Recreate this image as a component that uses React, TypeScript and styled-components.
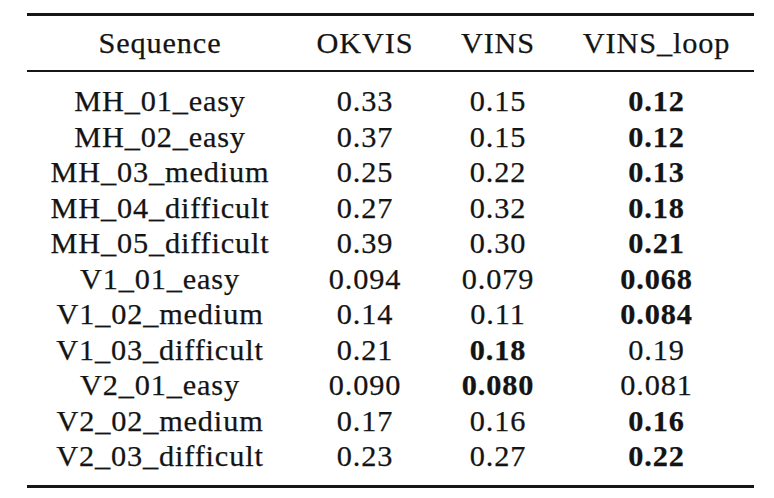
import React from "react";
import styled, { createGlobalStyle } from "styled-components";

const Global = createGlobalStyle`
  html, body { margin: 0; padding: 0; background: #ffffff; }
  body { font-family: "Liberation Serif", "Times New Roman", serif; color: #141414; }
`;

const Page = styled.div`
  width: 774px;
  height: 498px;
  padding: 13px 0 0 27px;
  box-sizing: border-box;
`;

const Table = styled.div`
  width: 727px;
  display: flex;
  flex-direction: column;
`;

const Rule = styled.div<{ $w: number }>`
  height: ${(p) => p.$w}px;
  background: #161616;
`;

const Section = styled.div<{ $top: number; $bottom: number }>`
  padding: ${(p) => p.$top}px 0 ${(p) => p.$bottom}px 0;
  display: flex;
  flex-direction: column;
`;

const Row = styled.div`
  display: grid;
  grid-template-columns: 266px 144px 122px 195px;
  height: 35.5px;
  line-height: 35.5px;
  font-size: 30.3px;
  letter-spacing: 0.85px;
  -webkit-text-stroke: 0.25px #141414;
`;

const Cell = styled.div<{ $bold?: boolean }>`
  text-align: center;
  white-space: nowrap;
  font-weight: ${(p) => (p.$bold ? 700 : 400)};
`;

type Val = { v: string; b?: boolean };
const rows: { name: string; vals: Val[] }[] = [
  { name: "MH_01_easy", vals: [{ v: "0.33" }, { v: "0.15" }, { v: "0.12", b: true }] },
  { name: "MH_02_easy", vals: [{ v: "0.37" }, { v: "0.15" }, { v: "0.12", b: true }] },
  { name: "MH_03_medium", vals: [{ v: "0.25" }, { v: "0.22" }, { v: "0.13", b: true }] },
  { name: "MH_04_difficult", vals: [{ v: "0.27" }, { v: "0.32" }, { v: "0.18", b: true }] },
  { name: "MH_05_difficult", vals: [{ v: "0.39" }, { v: "0.30" }, { v: "0.21", b: true }] },
  { name: "V1_01_easy", vals: [{ v: "0.094" }, { v: "0.079" }, { v: "0.068", b: true }] },
  { name: "V1_02_medium", vals: [{ v: "0.14" }, { v: "0.11" }, { v: "0.084", b: true }] },
  { name: "V1_03_difficult", vals: [{ v: "0.21" }, { v: "0.18", b: true }, { v: "0.19" }] },
  { name: "V2_01_easy", vals: [{ v: "0.090" }, { v: "0.080", b: true }, { v: "0.081" }] },
  { name: "V2_02_medium", vals: [{ v: "0.17" }, { v: "0.16" }, { v: "0.16", b: true }] },
  { name: "V2_03_difficult", vals: [{ v: "0.23" }, { v: "0.27" }, { v: "0.22", b: true }] },
];

export default function App() {
  return (
    <Page>
      <Global />
      <Table>
        <Rule $w={3} />
        <Section $top={9.5} $bottom={9}>
          <Row>
            <Cell>Sequence</Cell>
            <Cell>OKVIS</Cell>
            <Cell>VINS</Cell>
            <Cell>VINS_loop</Cell>
          </Row>
        </Section>
        <Rule $w={2} />
        <Section $top={12} $bottom={10}>
          {rows.map((r) => (
            <Row key={r.name}>
              <Cell>{r.name}</Cell>
              {r.vals.map((c, i) => (
                <Cell key={i} $bold={c.b}>
                  {c.v}
                </Cell>
              ))}
            </Row>
          ))}
        </Section>
        <Rule $w={3} />
      </Table>
    </Page>
  );
}
